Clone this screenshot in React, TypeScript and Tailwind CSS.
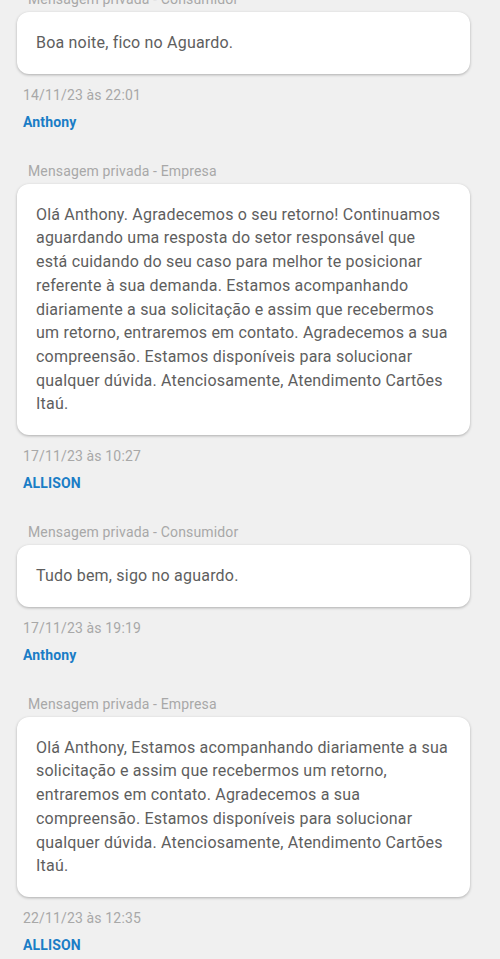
const font = { fontFamily: 'Roboto, "Noto Sans", sans-serif' };

type Msg = {
  tipo: string;
  texto: string;
  data: string;
  autor: string;
};

const mensagens: Msg[] = [
  {
    tipo: "Consumidor",
    texto: "Boa noite, fico no Aguardo.",
    data: "14/11/23 às 22:01",
    autor: "Anthony",
  },
  {
    tipo: "Empresa",
    texto:
      "Olá Anthony. Agradecemos o seu retorno! Continuamos aguardando uma resposta do setor responsável que está\u00a0cuidando do seu caso para melhor te posicionar referente à sua demanda. Estamos acompanhando diariamente a sua solicitação e assim que recebermos um retorno, entraremos em contato. Agradecemos a sua compreensão. Estamos disponíveis para solucionar qualquer dúvida. Atenciosamente, Atendimento Cartões Itaú.",
    data: "17/11/23 às 10:27",
    autor: "ALLISON",
  },
  {
    tipo: "Consumidor",
    texto: "Tudo bem, sigo no aguardo.",
    data: "17/11/23 às 19:19",
    autor: "Anthony",
  },
  {
    tipo: "Empresa",
    texto:
      "Olá Anthony, Estamos acompanhando diariamente a sua solicitação e assim que recebermos um retorno, entraremos em contato. Agradecemos a sua compreensão. Estamos disponíveis para solucionar qualquer dúvida. Atenciosamente, Atendimento Cartões Itaú.",
    data: "22/11/23 às 12:35",
    autor: "ALLISON",
  },
];

export default function App() {
  return (
    <div className="min-h-[959px] w-[500px] overflow-hidden bg-[#f0f0f0]" style={font}>
      <div className="-mt-[11px] flex flex-col pl-[17px] pr-[30px]">
        {mensagens.map((m, i) => (
          <div key={i} className="flex flex-col pb-[29px]">
            <p className="pl-[11px] text-[14px] leading-[20px] tracking-[0.15px] text-[#a8a8a8]">
              Mensagem privada - {m.tipo}
            </p>
            <div className="mt-[3px] rounded-[12px] bg-white py-[19px] pl-[19px] pr-[17px] shadow-[0_1px_3px_rgba(0,0,0,0.28)]">
              <p className="text-[16px] leading-[23.7px] tracking-[0.2px] text-[#5e5e5e]">{m.texto}</p>
            </div>
            <p className="mt-[11px] pl-[6px] text-[14px] leading-[20px] tracking-[0.15px] text-[#a8a8a8]">
              {m.data}
            </p>
            <p className="mt-[7px] pl-[6px] text-[14px] font-bold leading-[20px] tracking-[0.15px] text-[#1a7dc6]">
              {m.autor}
            </p>
          </div>
        ))}
      </div>
    </div>
  );
}
